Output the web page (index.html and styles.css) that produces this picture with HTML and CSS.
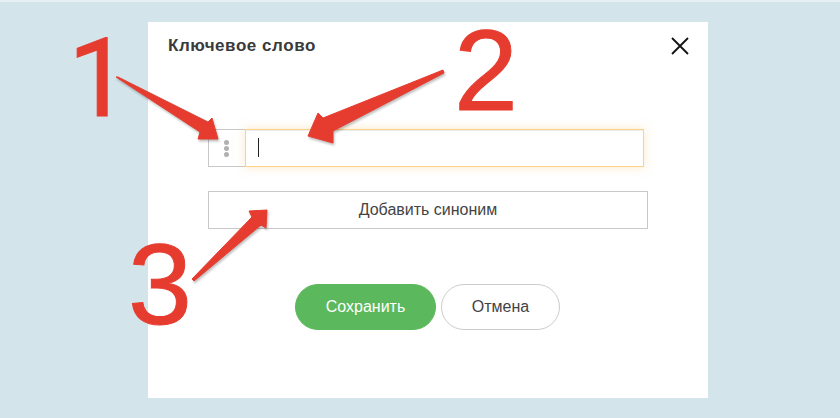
FILE: index.html
```html
<!DOCTYPE html>
<html lang="en">
<head>
    <meta charset="UTF-8">
    <meta name="viewport" content="width=device-width, initial-scale=1.0">
    <title>Ключевое слово</title>
    <link rel="stylesheet" href="styles.css">
</head>
<body>
    <div class="modal">
        <div class="modal-header">
            <div class="modal-title">Ключевое слово</div>
            <svg class="close" width="18" height="18" viewBox="0 0 18 18">
                <path d="M1 1 L17 17 M17 1 L1 17" stroke="#111" stroke-width="1.8" fill="none"/>
            </svg>
        </div>
        <div class="keyword-row">
            <div class="handle">
                <span class="dot"></span>
                <span class="dot"></span>
                <span class="dot"></span>
            </div>
            <div class="keyword-input"><span class="caret"></span></div>
        </div>
        <div class="add-btn">Добавить синоним</div>
        <div class="actions">
            <div class="btn btn-save">Сохранить</div>
            <div class="btn btn-cancel">Отмена</div>
        </div>
    </div>

    <!-- annotations on top of the screenshot -->
    <div class="num num-1">1</div>
    <div class="num num-2">2</div>
    <div class="num num-3">3</div>
    <svg class="arrows" width="840" height="418" viewBox="0 0 840 418">
        <path class="arrow" d="M116 77 L118 77 L208 122 L212 118 L218 139 L198 139 L200 132 Z"/>
        <path class="arrow" d="M443 70 L444 73 L333 131 L333 143 L308 136 L318 113 L323 118 Z"/>
        <path class="arrow" d="M192 279 L252 217 L249 211 L267 210 L266 228 L261 225 L194 281 Z"/>
    </svg>
</body>
</html>
```

FILE: styles.css
```css
body {
    margin: 0;
    height: 418px;
    overflow: hidden;
    background-color: #d4e4eb;
    border-top: 2px solid #e6eff3;
    box-sizing: border-box;
    font-family: "Liberation Sans", Arial, sans-serif;
    position: relative;
}

.modal {
    width: 560px;
    height: 376px;
    margin: 20px 0 0 148px;
    padding: 0 60px;
    box-sizing: border-box;
    background-color: #fff;
}

.modal-header {
    display: flex;
    justify-content: space-between;
    align-items: flex-start;
    height: 107px;
    margin: 0 -40px;
    padding-top: 14px;
    box-sizing: border-box;
}

.modal-title {
    margin-top: 1px;
    font-size: 17px;
    font-weight: bold;
    letter-spacing: 0.55px;
    line-height: 18px;
    color: #3a3a3a;
}

.close {
    margin-top: 1px;
    margin-right: -1px;
}

.keyword-row {
    display: flex;
    height: 38px;
}

.handle {
    width: 37px;
    box-sizing: border-box;
    border: 1px solid #c8c8c8;
    border-right: none;
    padding-right: 1px;
    display: flex;
    flex-direction: column;
    align-items: center;
    justify-content: center;
    gap: 1px;
}

.dot {
    width: 5px;
    height: 5px;
    border-radius: 50%;
    background-color: #b0b0b0;
}

.keyword-input {
    width: 399px;
    box-sizing: border-box;
    border: 1px solid #fdd28a;
    box-shadow: 0 0 9px rgba(253, 210, 138, 0.5), inset 0 1px 1px rgba(0, 0, 0, 0.08);
    background-color: #fff;
    padding: 8px 12px;
}

.caret {
    display: block;
    width: 1px;
    height: 19px;
    background-color: #222;
}

.add-btn {
    height: 38px;
    margin-top: 24px;
    box-sizing: border-box;
    border: 1px solid #c8c8c8;
    text-align: center;
    font-size: 16px;
    line-height: 36px;
    color: #444;
}

.actions {
    display: flex;
    justify-content: center;
    gap: 5px;
    margin-top: 55px;
    padding-right: 1px;
}

.btn {
    height: 46px;
    box-sizing: border-box;
    border-radius: 23px;
    text-align: center;
    font-size: 16px;
    line-height: 44px;
}

.btn-save {
    width: 141px;
    background-color: #5cb85c;
    border: 1px solid #5cb85c;
    color: #fff;
}

.btn-cancel {
    width: 119px;
    border: 1px solid #ccc;
    color: #444;
}

.num {
    position: absolute;
    font-size: 115px;
    line-height: 120px;
    color: #e63c2f;
    -webkit-text-stroke: 1px #e63c2f;
}

.num-1 {
    font-family: Roboto, sans-serif;
    font-size: 110px;
    left: 68px;
    top: 17px;
}

.num-2 {
    left: 454px;
    top: 8px;
}

.num-3 {
    left: 128px;
    top: 222px;
}

.arrows {
    position: absolute;
    left: 0;
    top: -2px;
}

.arrow {
    fill: #e63c2f;
    stroke: #e63c2f;
    stroke-width: 1;
    stroke-linejoin: round;
    filter: drop-shadow(1px 2px 1px rgba(0, 0, 0, 0.25));
}
```
